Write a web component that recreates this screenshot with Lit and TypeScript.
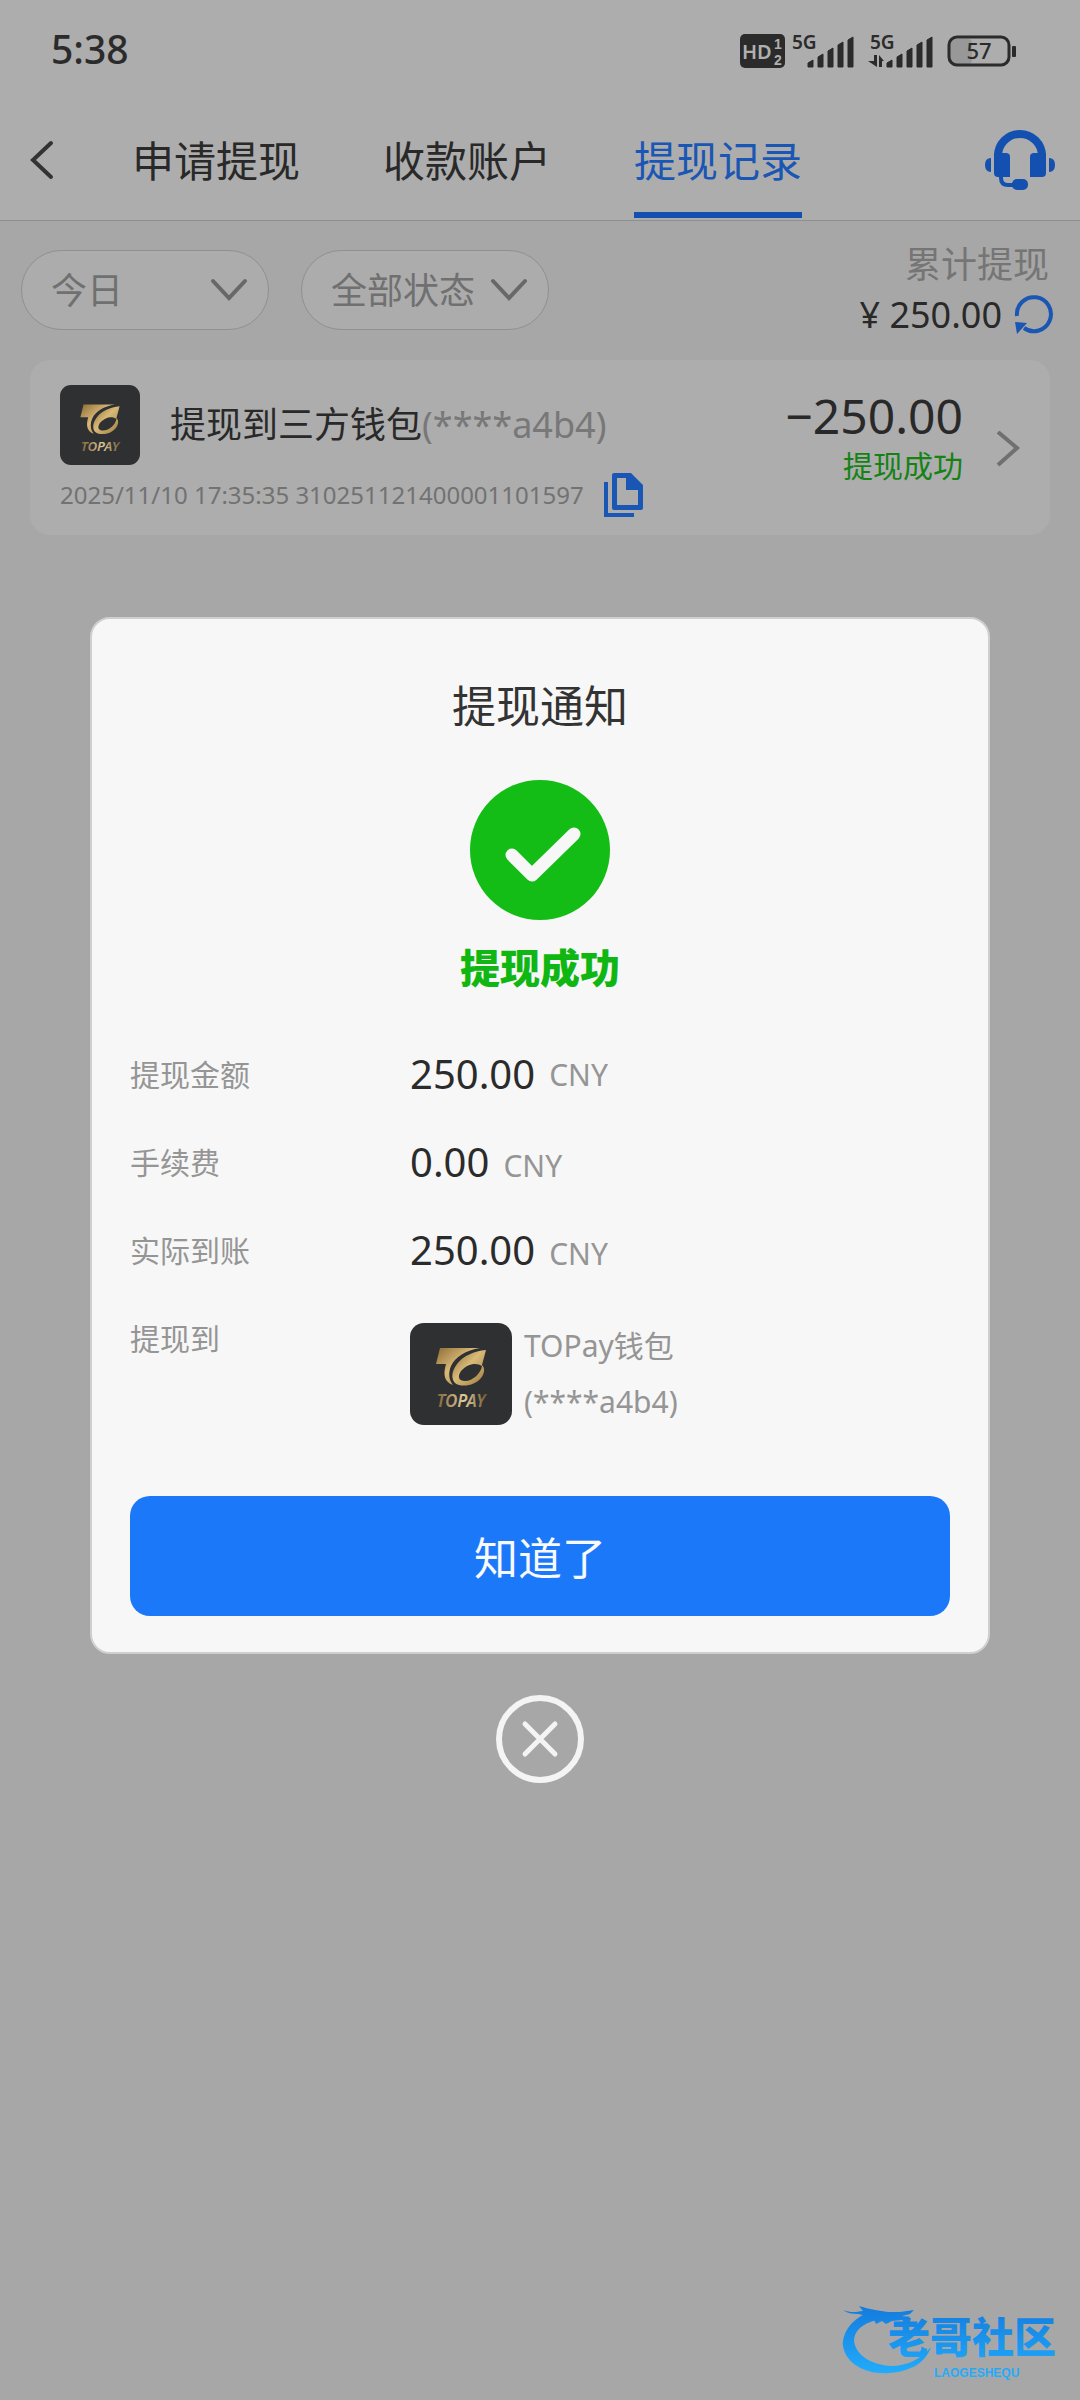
import { LitElement, html, svg, css } from "lit";
import { customElement, property, state } from "lit/decorators.js";

@customElement("topay-logo")
class TopayLogo extends LitElement {
  static styles = css`
    :host { display: block; flex: none; }
    .mark { display: block; width: 100%; height: 100%; }
    .name { font: italic 600 17px "Noto Sans", sans-serif; }
  `;

  render() {
    return html`
      <svg class="mark" viewBox="0 0 102 102" role="img" aria-label="TOPAY">
        <defs>
          <linearGradient id="gold" x1="0" y1="0" x2="1" y2="1">
            <stop offset="0" stop-color="#8d6c34"></stop>
            <stop offset="0.45" stop-color="#d8b978"></stop>
            <stop offset="1" stop-color="#9c7b3e"></stop>
          </linearGradient>
          <linearGradient id="word" x1="0" y1="0" x2="1" y2="0">
            <stop offset="0" stop-color="#80633a"></stop>
            <stop offset="0.55" stop-color="#e2cb9b"></stop>
            <stop offset="1" stop-color="#705530"></stop>
          </linearGradient>
        </defs>
        <rect width="102" height="102" rx="14" fill="#2f3032"></rect>
        <path fill="url(#gold)" d="M30 25H70C56 27 45 34 41 43C38 50 39 57 43 62C34 59 33 51 36 41H26Z"></path>
        <path fill="url(#gold)" fill-rule="evenodd" d="M76 27L72 42C75 45 75 50 71 55C66 61 57 64 49 62C41 60 40 50 47 41C53 33 64 28 76 27ZM72 43C66 39 57 41 51 48C47 54 49 58 55 58C63 58 71 50 72 43Z"></path>
        <text class="name" x="51" y="84" text-anchor="middle" fill="url(#word)">TOPAY</text>
      </svg>
    `;
  }
}

@customElement("status-bar")
class StatusBar extends LitElement {
  static styles = css`
    :host {
      display: flex;
      justify-content: space-between;
      align-items: center;
      box-sizing: border-box;
      height: 104px;
      padding: 0 62px 6px 51px;
      color: #2b2b2b;
    }
    .time { font-size: 39px; line-height: 48px; font-weight: 500; }
    .icons { display: block; width: 280px; height: 40px; }
    .hd { font-size: 20px; font-weight: 600; }
    .sim { font: 700 14px "Liberation Sans", sans-serif; }
    .net { font-size: 19px; font-weight: 600; }
    .charge { font-size: 22px; font-weight: 500; }
  `;

  private bars(x: number) {
    const heights = [7, 13, 19, 25, 30];
    return heights.map(
      (h, i) => svg`<path d="M${x + i * 10} 38V${41 - h}L${x + 5 + i * 10} ${38 - h}V38Z"
        fill="#2b2b2b" stroke="#2b2b2b" stroke-width="1" stroke-linejoin="round"></path>`
    );
  }

  render() {
    return html`
      <span class="time">5:38</span>
      <svg class="icons" viewBox="0 0 280 40" role="img" aria-label="HD 5G 5G 57">
        <rect x="2" y="5" width="45" height="34" rx="5" fill="#2b2b2b"></rect>
        <text class="hd" x="4" y="30" fill="#b0b0b0">HD</text>
        <text class="sim" x="36" y="20" fill="#b0b0b0">1</text>
        <text class="sim" x="36" y="36" fill="#b0b0b0">2</text>
        <text class="net" x="54" y="20" fill="#2b2b2b">5G</text>
        ${this.bars(70)}
        <text class="net" x="132" y="20" fill="#2b2b2b">5G</text>
        <path d="M136 26H139V38L130 32H136ZM141 38V26L146 32H144V38Z" fill="#2b2b2b"></path>
        ${this.bars(149)}
        <rect x="212" y="10" width="22" height="25" rx="4" fill="#989898"></rect>
        <rect x="211" y="8" width="60" height="28" rx="8" fill="none" stroke="#2b2b2b" stroke-width="3"></rect>
        <text class="charge" x="241" y="30" text-anchor="middle" fill="#2b2b2b">57</text>
        <rect x="274" y="17" width="4" height="11" rx="1" fill="#2b2b2b"></rect>
      </svg>
    `;
  }
}

@customElement("filter-select")
class FilterSelect extends LitElement {
  @property() label = "";
  @property({ attribute: false }) options: string[] = [];

  static styles = css`
    :host { display: block; }
    .pill {
      display: grid;
      align-items: center;
      box-sizing: border-box;
      width: 248px;
      height: 80px;
      border: 1px solid #909090;
      border-radius: 40px;
      background: #acacac;
    }
    .select {
      grid-area: 1 / 1;
      appearance: none;
      width: 100%;
      height: 100%;
      padding: 0 64px 0 29px;
      border: 0;
      border-radius: 40px;
      background: none;
      color: #707070;
      font: inherit;
      font-size: 36px;
    }
    .arrow {
      grid-area: 1 / 1;
      justify-self: end;
      width: 40px;
      height: 28px;
      margin-right: 19px;
      pointer-events: none;
    }
  `;

  render() {
    return html`
      <div class="pill">
        <select class="select" aria-label=${this.label}>
          ${this.options.map((o) => html`<option>${o}</option>`)}
        </select>
        <svg class="arrow" viewBox="0 0 40 28" aria-hidden="true">
          <path d="M4 5L20 22L36 5" fill="none" stroke="#686868" stroke-width="4" stroke-linecap="round"></path>
        </svg>
      </div>
    `;
  }
}

interface Amount {
  label: string;
  value: string;
  centered?: boolean;
}

@customElement("app-root")
class AppRoot extends LitElement {
  @state() private open = true;

  private tabs = ["申请提现", "收款账户", "提现记录"];
  private current = "提现记录";
  private amounts: Amount[] = [
    { label: "提现金额", value: "250.00", centered: true },
    { label: "手续费", value: "0.00" },
    { label: "实际到账", value: "250.00" },
  ];

  static styles = css`
    :host {
      display: block;
      position: relative;
      min-height: 100vh;
      background: #a7a7a7;
      color: #292929;
      font-family: "Noto Sans", "Noto Sans CJK SC", sans-serif;
    }
    button {
      padding: 0;
      border: 0;
      background: none;
      color: inherit;
      font: inherit;
    }
    a { color: inherit; text-decoration: none; }
    svg { display: block; }

    .top { background: #adadad; border-bottom: 1px solid #8f8f8f; }
    .nav {
      display: flex;
      align-items: center;
      height: 116px;
      padding: 0 24px 0 28px;
    }
    .back { width: 28px; margin-right: 76px; padding-bottom: 4px; }
    .service { padding-bottom: 4px; }
    .tabs { display: flex; align-self: stretch; gap: 83px; flex: 1; }
    .tab {
      display: flex;
      align-items: center;
      box-sizing: border-box;
      margin-bottom: 2px;
      padding-top: 6px;
      border-bottom: 6px solid transparent;
      font-size: 42px;
      line-height: 60px;
    }
    .tab.active { color: #1a56b4; border-bottom-color: #1450b0; }

    .filters {
      display: flex;
      align-items: center;
      gap: 32px;
      padding: 19px 26px 20px 21px;
    }
    .total {
      display: flex;
      flex-direction: column;
      align-items: flex-end;
      flex: 1;
      font-size: 36px;
      line-height: 50px;
    }
    .total-label { padding-right: 5px; color: #757575; }
    .total-value { display: flex; align-items: center; gap: 12px; }

    .record {
      display: flex;
      align-items: center;
      box-sizing: border-box;
      margin: 0 30px;
      padding: 25px 29px 18px 30px;
      border-radius: 20px;
      background: #adadad;
    }
    .record-main { flex: 1; }
    .record-head { display: flex; align-items: center; gap: 30px; font-size: 36px; line-height: 52px; }
    .record-logo { width: 80px; height: 80px; }
    .muted { color: #787878; }
    .record-meta {
      display: flex;
      align-items: center;
      gap: 20px;
      margin-top: 8px;
      color: #727272;
      font-size: 24px;
      line-height: 44px;
    }
    .record-side {
      display: flex;
      flex-direction: column;
      align-items: flex-end;
      margin-right: 32px;
      padding-bottom: 30px;
    }
    .record-amount { font-size: 48px; line-height: 60px; }
    .record-state { color: #158215; font-size: 30px; line-height: 40px; }

    .overlay {
      position: absolute;
      inset: 0;
      display: flex;
      flex-direction: column;
      align-items: center;
      justify-content: center;
      gap: 41px;
      padding: 0 90px;
    }
    .dialog {
      display: flex;
      flex-direction: column;
      align-items: center;
      box-sizing: border-box;
      width: 100%;
      padding: 57px 38px 36px;
      border: 2px solid #cfcfcf;
      border-radius: 20px;
      background: #f7f7f7;
    }
    .title { margin: 0 0 44px; font-size: 44px; font-weight: 400; line-height: 60px; color: #333; }
    .result { margin: 20px 0 34px; color: #10b612; font-size: 40px; font-weight: 900; line-height: 56px; }
    .details { width: 100%; margin: 0; font-size: 30px; color: #959595; }
    .row { display: flex; align-items: center; height: 88px; }
    .row dt { width: 280px; padding-bottom: 2px; }
    .row dd { display: flex; align-items: baseline; gap: 14px; margin: 0; }
    .row dd.centered { align-items: center; }
    .number { color: #2b2b2b; font-size: 40px; line-height: 52px; }
    .row.wallet { align-items: flex-start; height: auto; padding-top: 29px; line-height: 32px; }
    .row.wallet dd { align-items: center; gap: 12px; line-height: 56px; }
    .wallet-logo { width: 102px; height: 102px; }
    .wallet-text { display: flex; flex-direction: column; margin: -5px 0; }
    .confirm {
      width: 100%;
      height: 120px;
      margin-top: 71px;
      border-radius: 20px;
      background: #1b78f8;
      color: #f7f9ff;
      font-size: 44px;
    }

    .watermark { position: absolute; right: 16px; bottom: 20px; width: 222px; height: 76px; }
    .wm-name { font: 900 42px "Noto Sans CJK SC", sans-serif; }
    .wm-latin { font: 700 12px "Liberation Sans", sans-serif; }
  `;

  private close() {
    this.open = false;
  }

  render() {
    return html`
      <header class="top">
        <status-bar></status-bar>
        <nav class="nav">
          <button class="back" aria-label="返回">
            <svg width="28" height="40" viewBox="0 0 28 40">
              <path d="M23 3L5 20L23 37" fill="none" stroke="#333" stroke-width="4" stroke-linecap="round"></path>
            </svg>
          </button>
          <div class="tabs">
            ${this.tabs.map(
              (t) => html`<a class="tab ${t === this.current ? "active" : ""}" href="#">${t}</a>`
            )}
          </div>
          <button class="service" aria-label="客服">
            <svg width="72" height="60" viewBox="0 0 72 60" fill="#1450b0">
              <path d="M14 28V26A22 22 0 0 1 58 26V28" fill="none" stroke="#1450b0" stroke-width="8"></path>
              <path d="M10 23H22Q26 23 26 27V47H14Q10 47 10 43Z"></path>
              <path d="M62 23H50Q46 23 46 27V47H58Q62 47 62 43Z"></path>
              <path d="M7 28V42Q1 42 1 35Q1 28 7 28Z"></path>
              <path d="M65 28V42Q71 42 71 35Q71 28 65 28Z"></path>
              <path d="M17 45V48Q17 55 24 55H32" fill="none" stroke="#1450b0" stroke-width="4"></path>
              <rect x="28" y="49" width="16" height="11" rx="5"></rect>
            </svg>
          </button>
        </nav>
      </header>

      <main>
        <div class="filters">
          <filter-select label="日期" .options=${["今日"]}></filter-select>
          <filter-select label="状态" .options=${["全部状态"]}></filter-select>
          <div class="total">
            <span class="total-label">累计提现</span>
            <span class="total-value">
              ¥ 250.00
              <button aria-label="刷新">
                <svg width="40" height="40" viewBox="0 0 40 40">
                  <path d="M3 21A17 17 0 1 1 10 33" fill="none" stroke="#1a56b4" stroke-width="4"></path>
                  <path d="M1 27L13 28L3 39Z" fill="#1a56b4"></path>
                </svg>
              </button>
            </span>
          </div>
        </div>

        <article class="record">
          <div class="record-main">
            <div class="record-head">
              <topay-logo class="record-logo"></topay-logo>
              <span>提现到三方钱包<span class="muted">(****a4b4)</span></span>
            </div>
            <div class="record-meta">
              <span>2025/11/10 17:35:35 310251121400001101597</span>
              <button aria-label="复制">
                <svg width="39" height="44" viewBox="0 0 39 44">
                  <path fill="#1a56b4" fill-rule="evenodd" d="M10 0H27L39 12V35Q39 37 37 37H10Q8 37 8 35V2Q8 0 10 0ZM13 5V32H34V17H22V5Z"></path>
                  <path d="M2 9V42H30" fill="none" stroke="#1a56b4" stroke-width="4"></path>
                </svg>
              </button>
            </div>
          </div>
          <div class="record-side">
            <span class="record-amount">−250.00</span>
            <span class="record-state">提现成功</span>
          </div>
          <a href="#" aria-label="详情">
            <svg width="26" height="40" viewBox="0 0 26 40">
              <path d="M3 1L22 17L3 34" fill="none" stroke="#707070" stroke-width="4"></path>
            </svg>
          </a>
        </article>
      </main>

      ${this.open
        ? html`
            <div class="overlay">
              <section class="dialog" role="dialog" aria-modal="true" aria-labelledby="dialog-title">
                <h2 class="title" id="dialog-title">提现通知</h2>
                <svg width="140" height="140" viewBox="0 0 140 140" aria-hidden="true">
                  <circle cx="70" cy="70" r="70" fill="#13bd15"></circle>
                  <path d="M42 75L62 95L104 54" fill="none" stroke="#f7f7f7" stroke-width="13" stroke-linecap="round" stroke-linejoin="round"></path>
                </svg>
                <div class="result">提现成功</div>
                <dl class="details">
                  ${this.amounts.map(
                    (a) => html`
                      <div class="row">
                        <dt>${a.label}</dt>
                        <dd class=${a.centered ? "centered" : ""}>
                          <span class="number">${a.value}</span><span>CNY</span>
                        </dd>
                      </div>
                    `
                  )}
                  <div class="row wallet">
                    <dt>提现到</dt>
                    <dd>
                      <topay-logo class="wallet-logo"></topay-logo>
                      <span class="wallet-text"><span>TOPay钱包</span><span>(****a4b4)</span></span>
                    </dd>
                  </div>
                </dl>
                <button class="confirm" @click=${this.close}>知道了</button>
              </section>
              <button aria-label="关闭" @click=${this.close}>
                <svg width="88" height="88" viewBox="0 0 88 88">
                  <circle cx="44" cy="44" r="41" fill="none" stroke="#f4f4f4" stroke-width="6"></circle>
                  <path d="M29 29L59 59M59 29L29 59" stroke="#f4f4f4" stroke-width="5" stroke-linecap="round"></path>
                </svg>
              </button>
            </div>
          `
        : null}

      <svg class="watermark" viewBox="0 0 222 76" role="img" aria-label="老哥社区">
        <defs>
          <linearGradient id="sea" gradientUnits="userSpaceOnUse" x1="0" y1="0" x2="0" y2="72">
            <stop offset="0" stop-color="#1379dc"></stop>
            <stop offset="1" stop-color="#22aefc"></stop>
          </linearGradient>
        </defs>
        <g fill="url(#sea)">
          <path d="M27 8C8 16 0 30 1 42C4 60 24 71 48 69C70 67 84 58 89 43C80 54 66 62 49 62C30 61 14 52 12 37C12 27 20 20 34 16Z"></path>
          <path d="M1 6C9 9 14 8 21 7L17 2C24 4 28 5 33 6L46 8L58 8L72 6L68 10L60 12L69 14L68 18L60 16L50 17L44 20L40 17L34 20L32 16L24 18L26 12L16 10C10 10 5 9 1 6Z"></path>
          <text class="wm-name" x="46" y="49">老哥社区</text>
          <text class="wm-latin" x="92" y="73">LAOGESHEQU</text>
        </g>
      </svg>
    `;
  }
}
